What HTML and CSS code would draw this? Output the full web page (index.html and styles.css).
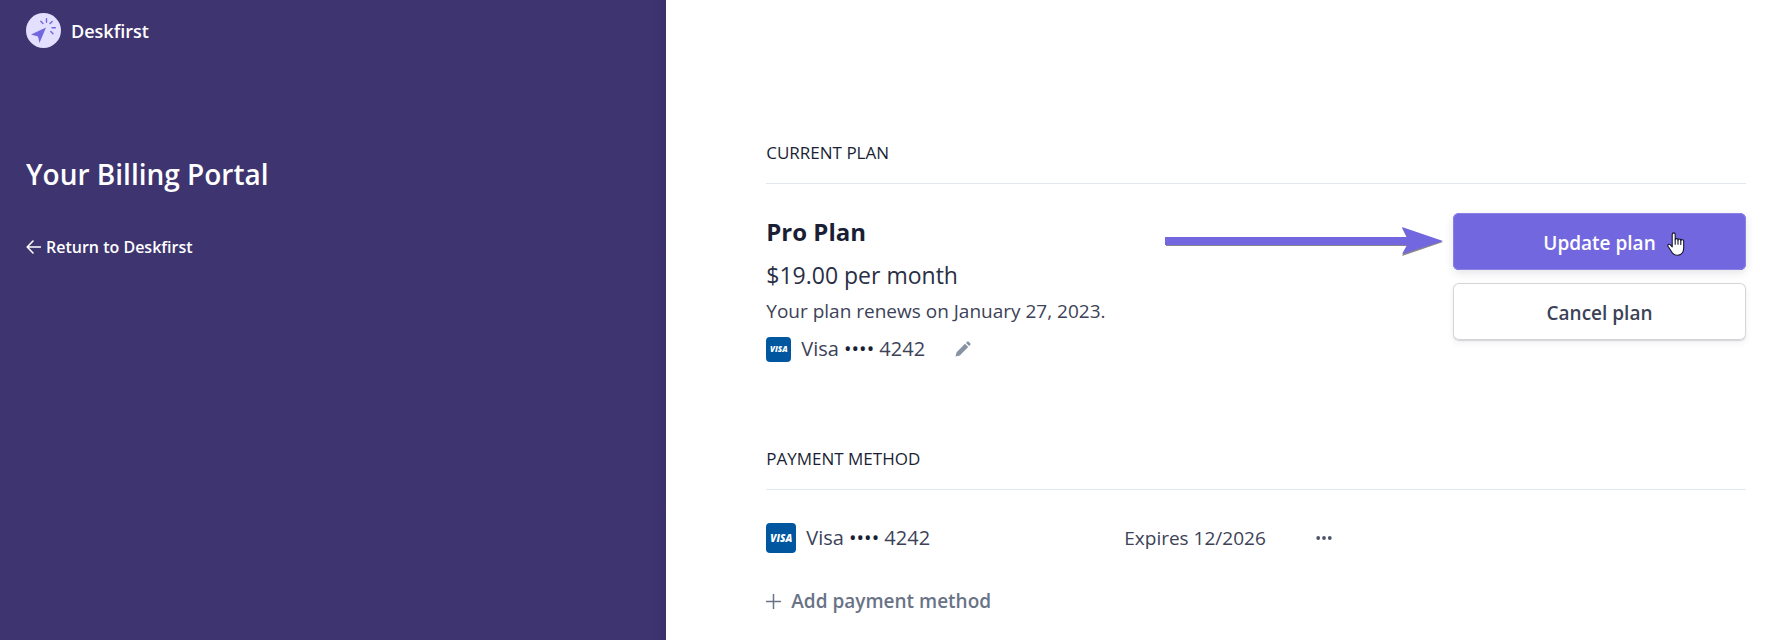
FILE: index.html
```html
<!DOCTYPE html>
<html lang="en">
<head>
<meta charset="utf-8">
<meta name="viewport" content="width=device-width, initial-scale=1">
<title>Deskfirst – Billing Portal</title>
<link rel="stylesheet" href="styles.css">
</head>
<body>
<div class="page">
  <aside class="sidebar">
    <div class="brand">
      <svg class="brand-logo" viewBox="0 0 35 35" aria-hidden="true">
        <circle cx="17.500" cy="17.500" r="17.500" fill="#e3dfff"/>
        <path d="M20 14.500 5 21.500l7 2L13.500 30z" fill="#7367e0"/>
        <path d="M20.500 5.800v3.400M14.800 8.200l2.200 2.200M26.200 8.400 24 10.600M26 14.700h3.400M24.800 18.600l2.200 2.200" stroke="#7367e0" stroke-width="1.400" stroke-linecap="round" fill="none"/>
      </svg>
      <span class="brand-name">Deskfirst</span>
    </div>
    <h1 class="title">Your Billing Portal</h1>
    <a class="return" href="#">
      <svg class="return-icon" viewBox="0 0 15 14" aria-hidden="true"><path d="M7 1 1.200 7 7 13M1.500 7h13" fill="none" stroke="currentColor" stroke-width="1.600" stroke-linecap="round" stroke-linejoin="round"/></svg>
      <span>Return to Deskfirst</span>
    </a>
  </aside>
  <main class="content">
    <section class="section">
      <h2 class="section-title">Current plan</h2>
      <div class="plan">
        <div class="plan-info">
          <h3 class="plan-name">Pro Plan</h3>
          <p class="plan-price">$19.00 per month</p>
          <p class="plan-renewal">Your plan renews on January 27, 2023.</p>
          <div class="plan-card">
            <span class="visa visa-small">VISA</span>
            <span>Visa <span class="mask">••••</span> 4242</span>
            <button class="icon-button edit" type="button" aria-label="Edit payment method">
              <svg class="edit-icon" viewBox="0 0 16 16" aria-hidden="true"><path d="M1.600 11.200 10 2.800 13.200 6l-8.400 8.400L.5 15.500zM11 1.900l1.100-1.100a1.200 1.200 0 0 1 1.700 0l1.400 1.400a1.200 1.200 0 0 1 0 1.700L14.100 5z" fill="currentColor"/></svg>
            </button>
          </div>
        </div>
        <svg class="arrow" viewBox="0 0 280 30" aria-hidden="true"><path d="M1 12h241l-5-10 41 14-41 14 5-10H1z" fill="#55505f" opacity=".7"/><path d="M0 11h242l-5-10 41 14-41 13 5-9H0z" fill="#7367e0"/></svg>
        <div class="actions">
          <button class="button button-primary" type="button">Update plan
            <svg class="pointer" viewBox="0 0 18 24" aria-hidden="true"><path d="M5.200 14.800V2.400a1.500 1.500 0 0 1 3 0v5.400a1.400 1.400 0 0 1 2.800.4 1.400 1.400 0 0 1 2.800.6 1.400 1.400 0 0 1 2.900.7v6.200c0 4.200-2.200 7-5.800 7.500-3.300.3-5.200-1.200-6.500-3.700L1 14.300c-.7-1.500 1-2.700 2.200-1.600z" fill="#fff" stroke="#15152b" stroke-width="1.100" stroke-linejoin="round"/><path d="M8.200 7.800v4.400M11 8.200v4M13.800 8.800v3.600" stroke="#15152b" stroke-width="1.100" stroke-linecap="round"/></svg>
          </button>
          <button class="button button-secondary" type="button">Cancel plan</button>
        </div>
      </div>
    </section>
    <section class="section">
      <h2 class="section-title">Payment method</h2>
      <div class="method">
        <div class="method-card">
          <span class="visa">VISA</span>
          <span>Visa <span class="mask">••••</span> 4242</span>
        </div>
        <span class="method-expiry">Expires 12/2026</span>
        <button class="icon-button" type="button" aria-label="More options">
          <svg class="more-icon" viewBox="0 0 16 16" aria-hidden="true"><g fill="currentColor"><circle cx="2.200" cy="8" r="1.900"/><circle cx="8" cy="8" r="1.900"/><circle cx="13.800" cy="8" r="1.900"/></g></svg>
        </button>
      </div>
      <button class="add" type="button">
        <svg class="add-icon" viewBox="0 0 15 15" aria-hidden="true"><path d="M7.500.5v14M.5 7.500h14" stroke="currentColor" stroke-width="1.500" stroke-linecap="round"/></svg>
        <span>Add payment method</span>
      </button>
    </section>
  </main>
</div>
</body>
</html>
```
FILE: styles.css
```css
* {
  box-sizing: border-box;
}

body,
h1,
h2,
h3,
p {
  margin: 0;
}

body {
  font-family: "Segoe UI", "Open Sans", "Noto Sans", sans-serif;
  font-size: 18px;
  line-height: 24px;
  color: #1a1f36;
  background: #fff;
}

button {
  font: inherit;
  border: 0;
  padding: 0;
  background: none;
  cursor: pointer;
}

.page {
  display: grid;
  grid-template-columns: 37.6% 1fr;
  min-height: 100vh;
}

.sidebar {
  padding: 13px 26px;
  color: #fff;
  background: linear-gradient(to left, #3b306a, #3e3470 14px);
}

.brand {
  display: flex;
  align-items: center;
  gap: 10px;
}

.brand-logo {
  width: 35px;
  height: 35px;
}

.brand-name {
  font-weight: 600;
}

.title {
  margin-top: 108px;
  font-size: 28px;
  font-weight: 600;
  line-height: 36px;
}

.return {
  display: flex;
  align-items: center;
  gap: 5px;
  margin-top: 43px;
  font-size: 16px;
  font-weight: 600;
  color: inherit;
  text-decoration: none;
}

.return-icon {
  width: 15px;
  height: 14px;
}

.content {
  padding: 140px 26px 0 100px;
}

.section + .section {
  margin-top: 84px;
}

.section-title {
  padding-bottom: 18px;
  border-bottom: 1px solid #e3e8ee;
  font-size: 17px;
  font-weight: 400;
  line-height: 25px;
  text-transform: uppercase;
}

.plan {
  display: flex;
  align-items: flex-start;
  padding-top: 29px;
}

.plan-info {
  flex: 1;
}

.plan-name {
  font-size: 24px;
  font-weight: 700;
  line-height: 38px;
}

.plan-price {
  font-size: 23px;
  line-height: 48px;
  color: #2a2f45;
}

.plan-renewal {
  font-size: 19px;
  line-height: 24px;
  color: #3c4257;
}

.plan-card {
  display: flex;
  align-items: center;
  gap: 10px;
  margin-top: 13px;
  font-size: 20px;
  line-height: 26px;
  color: #3c4257;
}

.mask {
  color: #1a1f36;
}

.visa {
  display: flex;
  align-items: center;
  justify-content: center;
  width: 30px;
  height: 30px;
  border-radius: 4px;
  font-size: 10px;
  font-style: italic;
  font-weight: 800;
  color: #fff;
  background: #00579f;
}

.visa-small {
  width: 25px;
  height: 25px;
  font-size: 8px;
}

.icon-button {
  display: flex;
  color: #4f566b;
}

.edit {
  margin-left: 20px;
  color: #8792a2;
}

.edit-icon,
.more-icon {
  width: 16px;
  height: 16px;
}

.arrow {
  width: 280px;
  height: 30px;
  margin: 13px 8px 0 0;
}

.actions {
  display: grid;
  gap: 13px;
  width: 293px;
}

.button {
  position: relative;
  height: 57px;
  padding-top: 2px;
  border-radius: 6px;
  font-size: 19px;
  font-weight: 600;
}

.button-primary {
  color: #fff;
  background: #7367e0;
  box-shadow: 0 0 0 1px #8a80e6 inset, 0 -1px 0 #5f55ba inset, 0 3px 8px #3c425724;
}

.button-secondary {
  color: #3c4257;
  background: #fff;
  box-shadow: 0 0 0 1px #d5d6da inset, 0 1px 1px #0000001f, 0 3px 6px #3c425714;
}

.pointer {
  position: absolute;
  top: 19px;
  right: 61px;
  width: 18px;
  height: 24px;
}

.method {
  display: grid;
  grid-template-columns: 358px 192px auto;
  align-items: center;
  justify-content: start;
  padding-top: 33px;
  font-size: 20px;
  color: #3c4257;
}

.method-card {
  display: flex;
  align-items: center;
  gap: 10px;
}

.method-expiry {
  font-size: 19px;
}

.add {
  display: flex;
  align-items: center;
  gap: 10px;
  margin-top: 35px;
  font-size: 19px;
  font-weight: 600;
  line-height: 26px;
  color: #697386;
}

.add-icon {
  width: 15px;
  height: 15px;
}
```
